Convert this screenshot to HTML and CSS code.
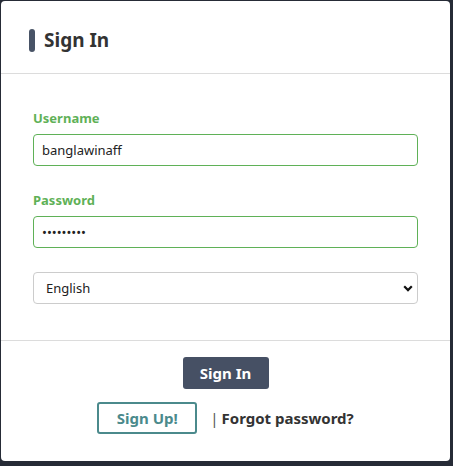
FILE: index.html
```html
<!DOCTYPE html>
<html lang="en">
<head>
<meta charset="utf-8">
<title>Sign In</title>
<link rel="stylesheet" href="styles.css">
</head>
<body>
<div class="card">
  <div class="card-header">
    <span class="accent"></span>
    <h1 class="title">Sign In</h1>
  </div>
  <form class="card-body">
    <div class="group">
      <label class="label" for="u">Username</label>
      <input class="field field-ok" id="u" type="text" value="banglawinaff">
    </div>
    <div class="group">
      <label class="label" for="p">Password</label>
      <input class="field field-ok" id="p" type="password" value="123456789">
    </div>
    <div class="group">
      <select class="field select">
        <option>English</option>
      </select>
    </div>
  </form>
  <div class="card-footer">
    <button class="btn btn-primary" type="button">Sign In</button>
    <div class="links">
      <button class="btn btn-outline" type="button">Sign Up!</button>
      <span class="sep">|</span>
      <a class="forgot" href="#">Forgot password?</a>
    </div>
  </div>
</div>
</body>
</html>
```
FILE: styles.css
```css
html, body {
  margin: 0;
  padding: 0;
}
body {
  background: #262b36;
  height: 466px;
  font-family: "Noto Sans", "Open Sans", sans-serif;
  color: #333;
  overflow: hidden;
}
.card {
  margin: 1px 3px 0 1px;
  height: 460px;
  background: #fff;
  border-radius: 4px;
  display: flex;
  flex-direction: column;
}
.card-header {
  height: 72px;
  border-bottom: 1px solid #dcdcdc;
  display: flex;
  align-items: center;
  padding: 0 28px;
  gap: 9px;
}
.accent {
  width: 6px;
  height: 23px;
  border-radius: 3px;
  background: #485366;
  margin-top: 6px;
}
.title {
  margin: 6px 0 0;
  font-size: 19px;
  font-weight: 700;
  color: #333;
}
.card-body {
  padding: 34px 32px 36px;
  margin: 0;
  border-bottom: 1px solid #dcdcdc;
}
.group + .group {
  margin-top: 24px;
}
.label {
  display: block;
  font-size: 13px;
  line-height: 20px;
  font-weight: 700;
  color: #5fb157;
  margin-bottom: 6px;
}
.field {
  display: block;
  box-sizing: border-box;
  width: 100%;
  height: 32px;
  margin: 0;
  padding: 0 8px;
  font-family: inherit;
  font-size: 13px;
  color: #222;
  background: #fff;
  border: 1px solid #ccc;
  border-radius: 4px;
  outline: none;
}
.field-ok {
  border-color: #5fb157;
}
.select {
  appearance: none;
  -webkit-appearance: none;
  padding-left: 12px;
  background-image: url("data:image/svg+xml,%3Csvg xmlns='http://www.w3.org/2000/svg' width='10' height='7' viewBox='0 0 10 7'%3E%3Cpath d='M1.2 1.3l3.8 3.8 3.8-3.8' fill='none' stroke='%23111' stroke-width='2.2'/%3E%3C/svg%3E");
  background-repeat: no-repeat;
  background-position: right 4px center;
}
.card-footer {
  flex: 1;
  display: flex;
  flex-direction: column;
  align-items: center;
  padding-top: 16px;
  gap: 13px;
}
.btn {
  font-family: inherit;
  font-size: 15px;
  font-weight: 700;
  height: 32px;
  border-radius: 3px;
  cursor: pointer;
  padding: 0;
}
.btn-primary {
  width: 86px;
  background: #465064;
  color: #fff;
  border: none;
}
.links {
  display: flex;
  align-items: center;
}
.btn-outline {
  width: 100px;
  background: #fff;
  color: #4b8a8c;
  border: 2px solid #4b8a8c;
}
.sep {
  margin-left: 13px;
  margin-right: 3px;
  color: #555;
  font-size: 15px;
  font-weight: 400;
}
.forgot {
  font-size: 15px;
  font-weight: 700;
  color: #333;
  text-decoration: none;
}
```
